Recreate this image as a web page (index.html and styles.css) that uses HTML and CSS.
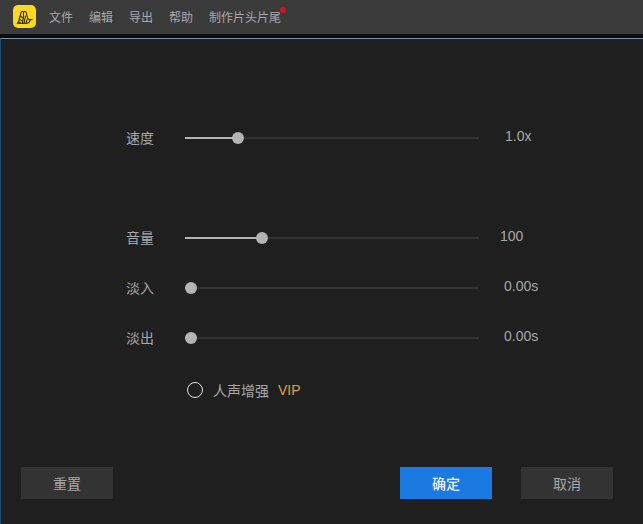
FILE: index.html
```html
<!DOCTYPE html>
<html lang="zh-CN">
<head>
<meta charset="utf-8">
<title>速度</title>
<link rel="stylesheet" href="styles.css">
</head>
<body>
<header class="menubar">
  <div class="logo">
    <svg viewBox="0 0 24 24" width="24" height="24" fill="none" stroke="#2a2410" stroke-width="1.1" stroke-linecap="round" stroke-linejoin="round">
      <path d="M5 18.500 C7 15 7.500 10 8.500 7.200 C9 5.800 10.800 5.600 11 7.200 C11.200 10 10.800 14 9.800 18.500"/>
      <path d="M11 7.200 C11.600 5.800 13.800 5.800 14 7.800 C14.300 10.500 14.500 13 16.500 14.500 L20 14.800"/>
      <path d="M4.500 18.500 L14.500 18.500 C16.500 18.500 17.500 17 17.800 15"/>
      <path d="M6.500 14 L10 16.500 M7.500 11 L10.500 13.200 M5.800 17 L8 18.500 M13 11 L11.500 18.500 M15 14 L13.500 18.500"/>
    </svg>
  </div>
  <nav class="menu">
    <span class="menu-item">文件</span>
    <span class="menu-item">编辑</span>
    <span class="menu-item">导出</span>
    <span class="menu-item">帮助</span>
    <span class="menu-item menu-badge">制作片头片尾</span>
  </nav>
</header>
<main class="panel">
  <section class="rows">
    <div class="row row-speed">
      <span class="label">速度</span>
      <div class="slider"><div class="fill" style="width:53px"><div class="knob"></div></div></div>
      <span class="value">1.0x</span>
    </div>
    <div class="row">
      <span class="label">音量</span>
      <div class="slider"><div class="fill" style="width:77px"><div class="knob"></div></div></div>
      <span class="value value-vol">100</span>
    </div>
    <div class="row">
      <span class="label">淡入</span>
      <div class="slider"><div class="fill" style="width:6px"><div class="knob"></div></div></div>
      <span class="value value-time">0.00s</span>
    </div>
    <div class="row">
      <span class="label">淡出</span>
      <div class="slider"><div class="fill" style="width:6px"><div class="knob"></div></div></div>
      <span class="value value-time">0.00s</span>
    </div>
    <div class="row row-voice">
      <span></span>
      <div class="voice">
        <span class="radio"></span>
        <span class="voice-text">人声增强</span>
        <span class="vip">VIP</span>
      </div>
    </div>
  </section>
  <footer class="actions">
    <button class="btn">重置</button>
    <div class="actions-right">
      <button class="btn btn-primary">确定</button>
      <button class="btn">取消</button>
    </div>
  </footer>
</main>
</body>
</html>
```
FILE: styles.css
```css
* { box-sizing: border-box; }
html, body { margin: 0; padding: 0; }
body {
  width: 643px;
  height: 524px;
  overflow: hidden;
  background: #1f1f1f;
  font-family: "Noto Sans CJK SC", "Liberation Sans", sans-serif;
  display: flex;
  flex-direction: column;
}
.menubar {
  height: 34px;
  flex: none;
  background: #3b3b3b;
  display: flex;
  align-items: center;
  padding-left: 13px;
  margin-bottom: 4px;
  box-shadow: 0 4px 0 #0d0d0d;
}
.logo {
  width: 23px;
  height: 23px;
  margin-top: -1px;
  border-radius: 5px;
  background: #fdd91e;
  display: flex;
  align-items: center;
  justify-content: center;
}
.menu {
  display: flex;
  gap: 16px;
  margin-left: 13px;
  font-size: 12px;
  color: #a9a9a9;
}
.menu-item { line-height: 18px; }
.menu-badge { position: relative; }
.menu-badge::after {
  content: "";
  position: absolute;
  right: -5px;
  top: -1px;
  width: 6px;
  height: 6px;
  border-radius: 50%;
  background: #d8121f;
}
.panel {
  flex: 1;
  background: #1f1f1f;
  border-top: 1px solid #6f93ad;
  border-left: 1px solid #1f4a70;
  display: flex;
  flex-direction: column;
  padding: 74px 30px 25px 20px;
}
.rows { display: flex; flex-direction: column; }
.row {
  height: 50px;
  display: grid;
  grid-template-columns: 59px 294px 1fr;
  align-items: center;
  padding-left: 105px;
}
.row-speed { margin-bottom: 50px; }
.row-voice { margin-top: 2px; }
.label {
  font-size: 14px;
  line-height: 20px;
  color: #a8a8a8;
  position: relative;
  top: -1px;
}
.slider {
  height: 2px;
  background: #323232;
}
.fill {
  height: 2px;
  background: #b4b4b4;
  position: relative;
}
.knob {
  position: absolute;
  top: -5px;
  right: -6px;
  width: 12px;
  height: 12px;
  border-radius: 50%;
  background: #b4b4b4;
}
.value {
  font-family: "Liberation Sans", sans-serif;
  font-size: 14px;
  line-height: 20px;
  color: #a8a8a8;
  padding-left: 26px;
  position: relative;
  top: -2px;
}
.value-vol { padding-left: 21px; }
.value-time { padding-left: 25px; }
.voice {
  display: flex;
  align-items: center;
}
.radio {
  width: 16px;
  height: 16px;
  margin-left: 2px;
  border: 1.500px solid #e2e2e2;
  border-radius: 50%;
}
.voice-text {
  margin-left: 10px;
  font-size: 14px;
  line-height: 20px;
  color: #a8a8a8;
}
.vip {
  margin-left: 9px;
  font-family: "Liberation Sans", sans-serif;
  font-size: 14px;
  line-height: 20px;
  color: #e0a04c;
}
.actions {
  margin-top: auto;
  display: flex;
  justify-content: space-between;
}
.actions-right { display: flex; gap: 29px; }
.btn {
  width: 92px;
  height: 32px;
  border: 0;
  padding: 0;
  background: #333333;
  color: #a8a8a8;
  font: inherit;
  font-size: 14px;
}
.btn-primary {
  background: #1a7ae2;
  color: #f2f2f2;
  font-weight: 500;
}
```
